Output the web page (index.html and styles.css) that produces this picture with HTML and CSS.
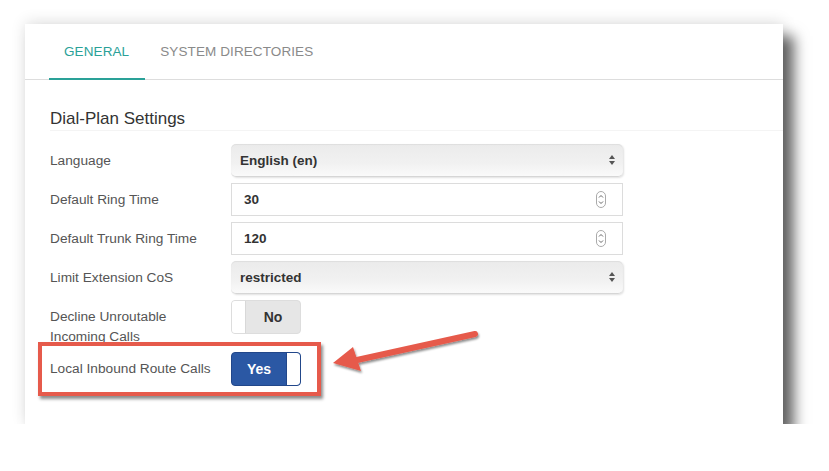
FILE: index.html
```html
<!DOCTYPE html>
<html>
    <head>
        <meta charset="UTF-8">
        <title>Dial-Plan Settings</title>
        <link rel="stylesheet" href="styles.css">
    </head>
    <body>
        <div class="card">
            <div class="tabs">
                <div class="tab active">GENERAL</div>
                <div class="tab">SYSTEM DIRECTORIES</div>
            </div>

            <div class="section">
                <h3 class="section-title">Dial-Plan Settings</h3>

                <div class="row">
                    <label>Language</label>
                    <div class="control select">
                        <span>English (en)</span>
                        <svg class="sel-arrow" width="8" height="12" viewBox="0 0 8 12"><path d="M4 1 L7 5 L1 5 Z M4 11 L7 7 L1 7 Z" fill="#555"/></svg>
                    </div>
                </div>

                <div class="row">
                    <label>Default Ring Time</label>
                    <div class="control number">
                        <span>30</span>
                        <svg class="spin" width="10" height="17" viewBox="0 0 10 17"><rect x="0.5" y="0.5" width="9" height="16" rx="4.5" fill="#fff" stroke="#aaa"/><path d="M3 6.5 L5 4.5 L7 6.5 M3 10.5 L5 12.5 L7 10.5" fill="none" stroke="#666" stroke-width="1"/></svg>
                    </div>
                </div>

                <div class="row">
                    <label>Default Trunk Ring Time</label>
                    <div class="control number">
                        <span>120</span>
                        <svg class="spin" width="10" height="17" viewBox="0 0 10 17"><rect x="0.5" y="0.5" width="9" height="16" rx="4.5" fill="#fff" stroke="#aaa"/><path d="M3 6.5 L5 4.5 L7 6.5 M3 10.5 L5 12.5 L7 10.5" fill="none" stroke="#666" stroke-width="1"/></svg>
                    </div>
                </div>

                <div class="row">
                    <label>Limit Extension CoS</label>
                    <div class="control select">
                        <span>restricted</span>
                        <svg class="sel-arrow" width="8" height="12" viewBox="0 0 8 12"><path d="M4 1 L7 5 L1 5 Z M4 11 L7 7 L1 7 Z" fill="#555"/></svg>
                    </div>
                </div>

                <div class="row row-top">
                    <label class="two-line">Decline Unroutable Incoming Calls</label>
                    <div class="toggle off">
                        <div class="knob"></div>
                        <div class="toggle-text">No</div>
                    </div>
                </div>

                <div class="row">
                    <label>Local Inbound Route Calls</label>
                    <div class="toggle on">
                        <div class="toggle-text">Yes</div>
                        <div class="knob"></div>
                    </div>
                </div>
            </div>

            <!-- annotation -->
            <div class="highlight"></div>
            <svg class="arrow" width="160" height="50" viewBox="0 0 160 50">
                <defs>
                    <filter id="sh" x="-20%" y="-40%" width="140%" height="180%">
                        <feDropShadow dx="1" dy="2" stdDeviation="1.2" flood-color="#000" flood-opacity="0.45"/>
                    </filter>
                </defs>
                <g filter="url(#sh)">
                    <path d="M148 7 L30 33" stroke="#e65a4b" stroke-width="6" stroke-linecap="round"/>
                    <path d="M6 36 L26 20 L34 44 Z" fill="#e65a4b"/>
                </g>
            </svg>
        </div>
    </body>
</html>
```

FILE: styles.css
```css
/* base */
body {
    margin: 0;
    padding: 24px 0 0 25px;
    background-color: #ffffff;
    font-family: "Liberation Sans", Arial, sans-serif;
}

.card {
    position: relative;
    width: 758px;
    height: 400px;
    background-color: #ffffff;
    box-shadow: 0 -2px 14px rgba(0, 0, 0, 0.12), 11px 12px 13px rgba(0, 0, 0, 0.6);
}

/* tabs */
.tabs {
    display: flex;
    padding-left: 24px;
    height: 55px;
    border-bottom: 1px solid #dddddd;
}

.tab {
    padding: 20px 16px 0 15px;
    font-size: 13.5px;
    color: #8a8a8a;
    letter-spacing: 0.1px;
}

.tab.active {
    color: #2aa198;
    border-bottom: 2px solid #2aa198;
    margin-bottom: -1px;
}

/* section */
.section {
    padding: 0 0 0 25px;
}

.section-title {
    margin: 0 0 13px 0;
    padding: 29px 0 1px 0;
    font-size: 17px;
    font-weight: normal;
    color: #333333;
    border-bottom: 1px solid #f4f4f4;
}

.row {
    display: flex;
    align-items: center;
    height: 33px;
    margin-bottom: 6px;
}

.row label {
    width: 181px;
    font-size: 13.7px;
    color: #555555;
}

.row-top {
    align-items: flex-start;
    height: 46px;
}

.row-top .two-line {
    width: 150px;
    line-height: 20px;
    margin-top: 7px;
}

.row-top .toggle {
    margin-left: 31px;
}

.control {
    box-sizing: border-box;
    width: 392px;
    height: 33px;
    display: flex;
    align-items: center;
    justify-content: space-between;
    font-size: 13.5px;
    font-weight: bold;
    color: #333333;
}

.select {
    padding: 0 7px 0 9px;
    border-radius: 5px;
    border-bottom: 1px solid #d6d6d6;
    background: linear-gradient(#ebebeb, #f1f1f1 60%, #fafafa);
    box-shadow: inset 0 1px 1px rgba(0, 0, 0, 0.06), 1px 1px 2px rgba(0, 0, 0, 0.12);
}

.number {
    padding: 0 16px 0 12px;
    border: 1px solid #dcdcdc;
    background-color: #ffffff;
}

/* toggles */
.toggle {
    box-sizing: border-box;
    width: 70px;
    height: 34px;
    display: flex;
    border-radius: 4px;
    overflow: hidden;
    font-size: 14px;
    font-weight: bold;
}

.toggle .knob {
    width: 13px;
    background-color: #ffffff;
}

.toggle-text {
    flex: 1;
    display: flex;
    align-items: center;
    justify-content: center;
}

.toggle.off {
    background-color: #e6e6e6;
    border: 1px solid #dddddd;
    color: #333333;
}

.toggle.off .knob {
    border-right: 1px solid #d8d8d8;
}

.toggle.on {
    background-color: #2b58a4;
    border: 1px solid #22478a;
    color: #ffffff;
}

.toggle.on .knob {
    border-radius: 0 3px 3px 0;
    border-left: 1px solid #22478a;
}

/* annotation */
.highlight {
    position: absolute;
    left: 13px;
    top: 318px;
    width: 275px;
    height: 46px;
    border: 4px solid #e65a4b;
    box-shadow: 2px 3px 3px rgba(0, 0, 0, 0.45);
}

.arrow {
    position: absolute;
    left: 302px;
    top: 303px;
}
```
